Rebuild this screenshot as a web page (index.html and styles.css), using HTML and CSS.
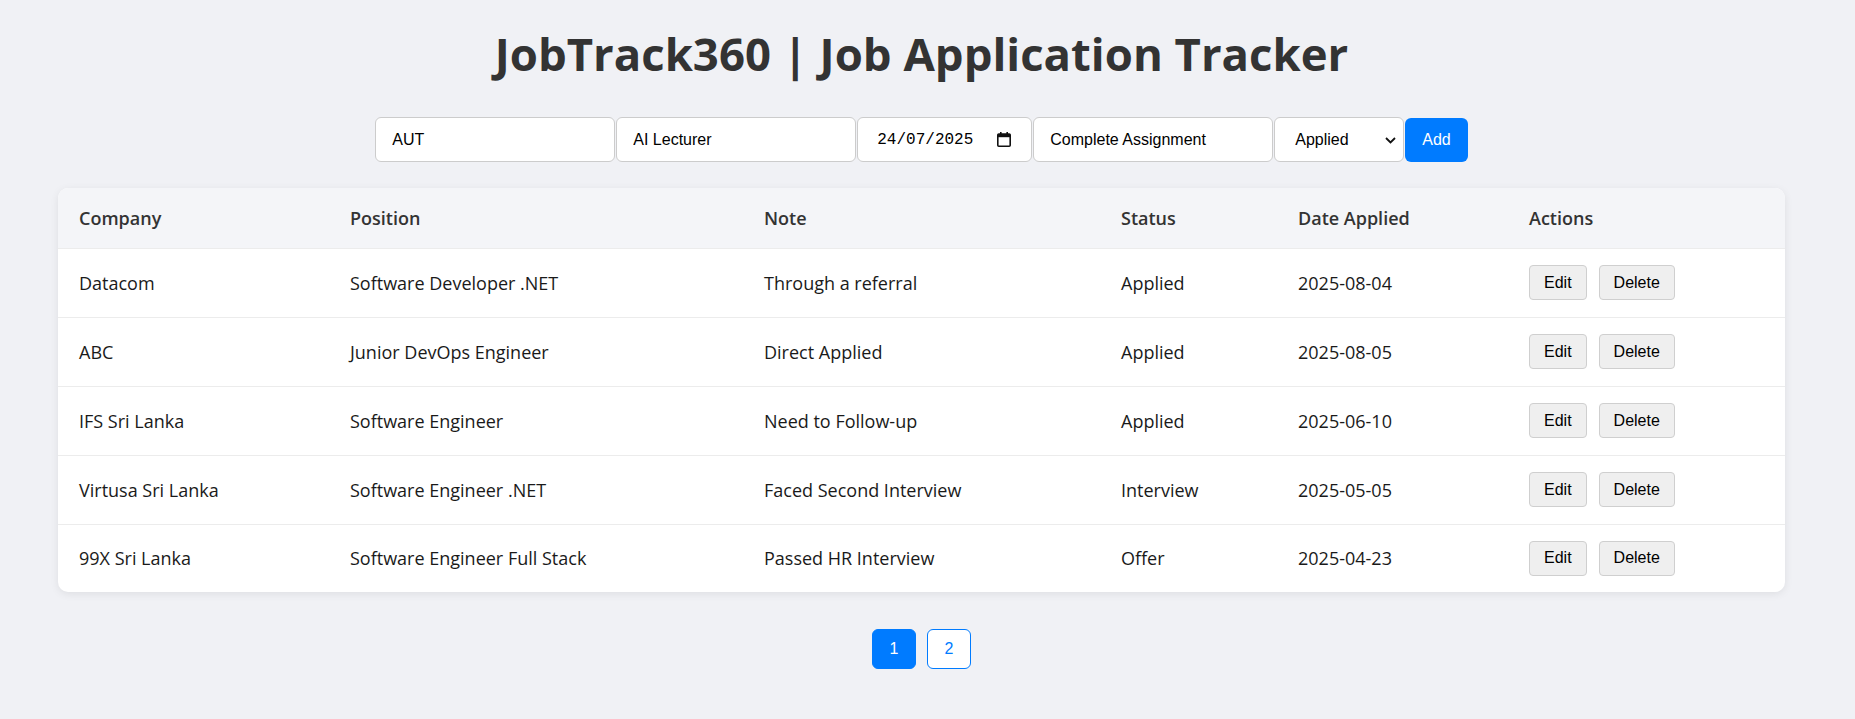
FILE: index.html
```html
<!DOCTYPE html>
<html lang="en">
<head>
<meta charset="utf-8">
<title>JobTrack360 | Job Application Tracker</title>
<link rel="stylesheet" href="styles.css">
</head>
<body>
<div class="page">
  <h1 class="title">JobTrack360 | Job Application Tracker</h1>

  <form class="add-form">
    <input class="field field-wide" type="text" value="AUT" placeholder="Company">
    <input class="field field-wide" type="text" value="AI Lecturer" placeholder="Position">
    <div class="field field-date">
      <input class="date-text" type="text" value="24/07/2025">
      <svg class="cal-icon" width="14" height="15" viewBox="0 0 14 15" aria-hidden="true">
        <rect x="3" y="0" width="1.6" height="3" fill="#111"/>
        <rect x="9.4" y="0" width="1.6" height="3" fill="#111"/>
        <rect x="0.8" y="2" width="12.4" height="12.2" rx="1" fill="none" stroke="#111" stroke-width="1.6"/>
        <rect x="0.8" y="2" width="12.4" height="3.2" fill="#111"/>
      </svg>
    </div>
    <input class="field field-wide" type="text" value="Complete Assignment" placeholder="Note">
    <div class="field field-select">
      <select class="select">
        <option selected>Applied</option>
        <option>Interview</option>
        <option>Offer</option>
        <option>Rejected</option>
      </select>
      <svg class="chevron" width="11" height="7" viewBox="0 0 11 7" aria-hidden="true">
        <path d="M1 1l4.5 4.5L10 1" fill="none" stroke="#111" stroke-width="1.8"/>
      </svg>
    </div>
    <button class="add-btn" type="button">Add</button>
  </form>

  <div class="card">
    <table class="jobs">
      <colgroup>
        <col class="c-company"><col class="c-position"><col class="c-note">
        <col class="c-status"><col class="c-date"><col class="c-actions">
      </colgroup>
      <thead>
        <tr><th>Company</th><th>Position</th><th>Note</th><th>Status</th><th>Date Applied</th><th>Actions</th></tr>
      </thead>
      <tbody>
        <tr><td>Datacom</td><td>Software Developer .NET</td><td>Through a referral</td><td>Applied</td><td>2025-08-04</td>
          <td><button class="act-btn" type="button">Edit</button><button class="act-btn" type="button">Delete</button></td></tr>
        <tr><td>ABC</td><td>Junior DevOps Engineer</td><td>Direct Applied</td><td>Applied</td><td>2025-08-05</td>
          <td><button class="act-btn" type="button">Edit</button><button class="act-btn" type="button">Delete</button></td></tr>
        <tr><td>IFS Sri Lanka</td><td>Software Engineer</td><td>Need to Follow-up</td><td>Applied</td><td>2025-06-10</td>
          <td><button class="act-btn" type="button">Edit</button><button class="act-btn" type="button">Delete</button></td></tr>
        <tr><td>Virtusa Sri Lanka</td><td>Software Engineer .NET</td><td>Faced Second Interview</td><td>Interview</td><td>2025-05-05</td>
          <td><button class="act-btn" type="button">Edit</button><button class="act-btn" type="button">Delete</button></td></tr>
        <tr><td>99X Sri Lanka</td><td>Software Engineer Full Stack</td><td>Passed HR Interview</td><td>Offer</td><td>2025-04-23</td>
          <td><button class="act-btn" type="button">Edit</button><button class="act-btn" type="button">Delete</button></td></tr>
      </tbody>
    </table>
  </div>

  <nav class="pager">
    <button class="page-btn active" type="button">1</button>
    <button class="page-btn" type="button">2</button>
  </nav>
</div>
</body>
</html>
```
FILE: styles.css
```css
* { box-sizing: border-box; }

body {
  margin: 0;
  background: #f0f1f5;
  font-family: "Open Sans", "Noto Sans", sans-serif;
  color: #222;
}

.page {
  width: 1727px;
  margin-left: 58px;
  display: flex;
  flex-direction: column;
  align-items: center;
}

.title {
  margin: 23px 0 0;
  font-size: 45.5px;
  line-height: 60px;
  font-weight: 700;
  color: #333;
  letter-spacing: 0;
}

.add-form {
  margin-top: 34px;
  display: flex;
  align-items: center;
  gap: 1px;
}

.field {
  height: 45px;
  border: 1px solid #ccc;
  border-radius: 6px;
  background: #fff;
  font: 16px "Liberation Sans", Arial, sans-serif;
  color: #000;
}

input.field {
  padding: 0 16px;
  outline: none;
}

.field-wide { width: 240px; }

.field-date {
  width: 175px;
  display: flex;
  align-items: center;
  padding: 0 20px 0 19px;
}

.date-text {
  flex: 1;
  min-width: 0;
  border: 0;
  outline: none;
  padding: 0;
  background: transparent;
  font: 16px "Liberation Mono", monospace;
  color: #000;
}

.cal-icon { flex: none; }

.field-select {
  width: 130px;
  position: relative;
  display: flex;
  align-items: center;
}

.select {
  appearance: none;
  -webkit-appearance: none;
  width: 100%;
  height: 100%;
  border: 0;
  outline: none;
  background: transparent;
  padding: 0 30px 0 20px;
  font: 16px "Liberation Sans", Arial, sans-serif;
  color: #000;
}

.chevron {
  position: absolute;
  right: 7px;
  top: 19px;
  pointer-events: none;
}

.add-btn {
  height: 44px;
  padding: 0 17px;
  border: 0;
  border-radius: 6px;
  background: #007bff;
  color: #fff;
  font: 16px "Liberation Sans", Arial, sans-serif;
}

.card {
  margin-top: 26px;
  width: 100%;
  background: #fff;
  border-radius: 10px;
  overflow: hidden;
  box-shadow: 0 2px 8px rgba(0, 0, 0, 0.08);
}

.jobs {
  width: 100%;
  border-collapse: collapse;
  table-layout: fixed;
}

.c-company { width: 271px; }
.c-position { width: 414px; }
.c-note { width: 357px; }
.c-status { width: 177px; }
.c-date { width: 231px; }
.c-actions { width: 277px; }

.jobs th,
.jobs td {
  text-align: left;
  padding: 0 0 0 21px;
  font-size: 18px;
  border-bottom: 1px solid #ececec;
  vertical-align: middle;
}

.jobs th {
  height: 60px;
  background: #f4f5f8;
  font-weight: 600;
  color: #333;
}

.jobs td {
  height: 69px;
  color: #1a1a1a;
}

.jobs tbody tr:last-child td { border-bottom: 0; height: 68px; }

.act-btn {
  height: 35px;
  padding: 0 14px;
  margin-right: 12px;
  border: 1px solid #cfcfcf;
  border-radius: 4px;
  background: #efefef;
  color: #000;
  font: 16px "Liberation Sans", Arial, sans-serif;
}

.pager {
  margin-top: 37px;
  display: flex;
  gap: 11px;
}

.page-btn {
  width: 44px;
  height: 40px;
  border: 1px solid #007bff;
  border-radius: 6px;
  background: #fff;
  color: #007bff;
  font: 16px "Liberation Sans", Arial, sans-serif;
}

.page-btn.active {
  background: #007bff;
  color: #fff;
}
```
